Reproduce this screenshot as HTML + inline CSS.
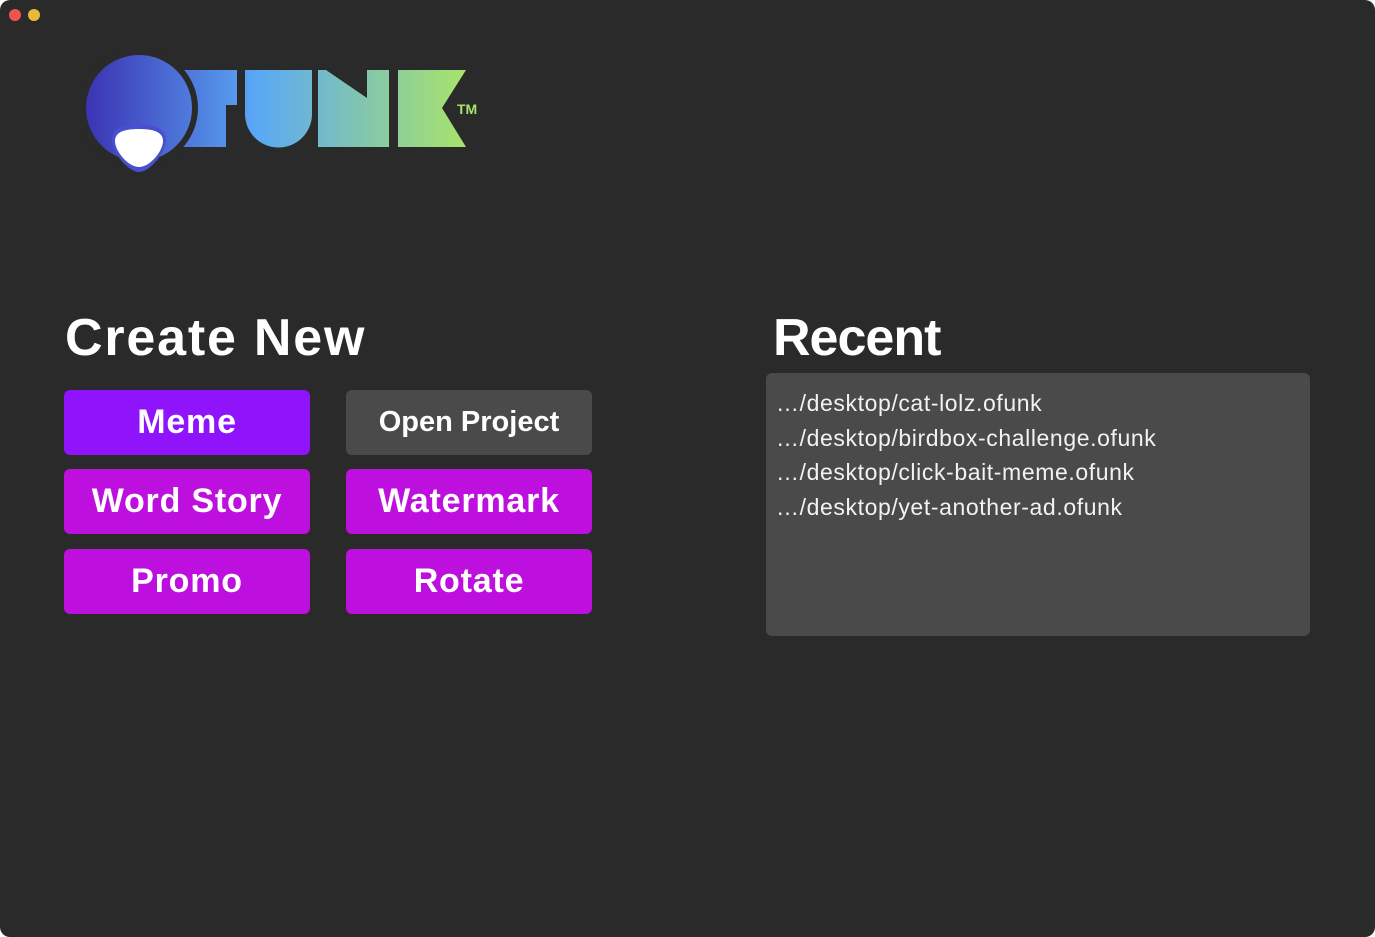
<!DOCTYPE html>
<html><head><style>
html,body{margin:0;padding:0;background:#fff;}
.win{position:absolute;left:0;top:0;width:1375px;height:937px;background:#2a2a2a;border-radius:10px;overflow:hidden;font-family:"Liberation Sans",sans-serif;}
.dot{position:absolute;top:9px;width:12px;height:12px;border-radius:50%;}
h2{position:absolute;margin:0;color:#fff;font-weight:bold;font-size:52px;line-height:1;}
.btn{position:absolute;width:246px;height:65px;border-radius:6px;color:#fff;font-weight:bold;font-size:34px;text-align:center;line-height:65px;letter-spacing:0.8px;}
.p{background:#bd10de}
.box{position:absolute;left:766px;top:373px;width:544px;height:263px;background:#4a4a4a;border-radius:6px;}
.box div{position:absolute;left:10px;color:#f2f2f2;font-size:23px;letter-spacing:0.6px;}
</style></head><body>
<div class="win">
<div class="dot" style="left:9px;background:#f0544c"></div>
<div class="dot" style="left:28px;background:#e8ba37"></div>
<svg width="500" height="190" style="position:absolute;left:0;top:0">
<defs><linearGradient id="g" gradientUnits="userSpaceOnUse" x1="86" y1="0" x2="466" y2="0">
<stop offset="0" stop-color="#3c33b3"/><stop offset="0.45" stop-color="#5aa8f6"/><stop offset="1" stop-color="#a8e36a"/></linearGradient></defs>
<polygon fill="url(#g)" points="183,70 237,70 237,105 226,105 226,147 183,147"/>
<path fill="url(#g)" d="M245,70 H312 V114 A33,33 0 0 1 245,114 Z"/>
<polygon fill="url(#g)" points="318,70 326,70 367,98 367,70 389,70 389,147 318,147"/>
<polygon fill="url(#g)" points="398,70 466,70 442,108 466,147 398,147"/>
<circle cx="139" cy="108" r="59" fill="#2a2a2a"/>
<circle cx="139" cy="108" r="53" fill="url(#g)"/>
<path fill="#4a4fd0" d="M112,140 C112,128 125,124 139,124 C153,124 166,128 166,140 C166,152 150,172 139,172 C128,172 112,152 112,140Z"/>
<path fill="#fff" d="M115,141 C115,131 127,129 139,129 C151,129 163,131 163,141 C163,151 150,167 139,167 C128,167 115,151 115,141Z"/>
<text x="457" y="114" fill="#a8e36a" font-size="14" font-weight="bold" font-family="Liberation Sans,sans-serif">TM</text>
</svg>
<h2 style="left:65px;top:312px;letter-spacing:1.8px">Create New</h2>
<div class="btn" style="left:64px;top:390px;background:#8f14fb">Meme</div>
<div class="btn" style="left:346px;top:390px;background:#4a4a4a;font-size:29px;letter-spacing:0">Open Project</div>
<div class="btn p" style="left:64px;top:469px">Word Story</div>
<div class="btn p" style="left:346px;top:469px">Watermark</div>
<div class="btn p" style="left:64px;top:549px">Promo</div>
<div class="btn p" style="left:346px;top:549px">Rotate</div>
<h2 style="left:773px;top:312px;letter-spacing:-1px">Recent</h2>
<div class="box">
<div style="top:17px">…/desktop/cat-lolz.ofunk</div>
<div style="top:52px">…/desktop/birdbox-challenge.ofunk</div>
<div style="top:86px">…/desktop/click-bait-meme.ofunk</div>
<div style="top:121px">…/desktop/yet-another-ad.ofunk</div>
</div>
</div>
</body></html>
